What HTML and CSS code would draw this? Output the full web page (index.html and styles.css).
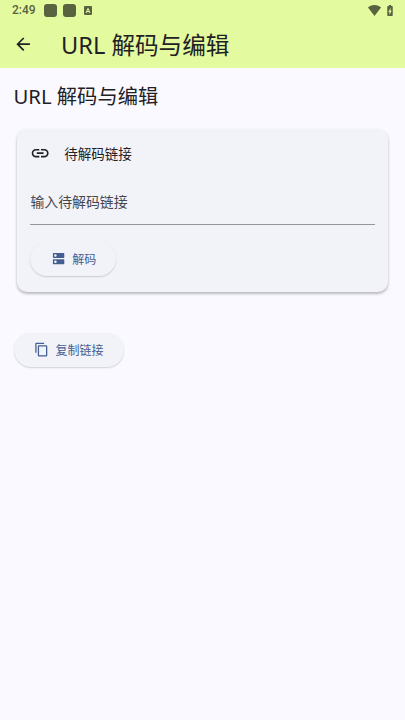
FILE: index.html
```
<!DOCTYPE html>
<html lang="zh-CN">
<head>
<meta charset="utf-8">
<title>URL 解码与编辑</title>
<link rel="stylesheet" href="styles.css">
</head>
<body>
<header class="top">
  <div class="status">
    <span class="time">2:49</span>
    <i class="block"></i><i class="block"></i>
    <svg class="badge" viewBox="0 0 8 9"><rect width="8" height="9" rx="1"/><path d="M2 7 4 2.400 6 7M2.800 5.600h2.400"/></svg>
    <svg class="wifi" viewBox="0 0 24 20"><path d="M12 20 0 4.500C3 1.800 7 0 12 0s9 1.800 12 4.500z"/></svg>
    <svg class="battery" viewBox="7 2 10 20"><path d="M15.670 4H14V2h-4v2H8.330C7.600 4 7 4.600 7 5.330v15.330C7 21.400 7.600 22 8.330 22h7.330c.740 0 1.340-.600 1.340-1.330V5.330C17 4.600 16.400 4 15.670 4zM11 20v-5.500H9L13 7v5.500h2L11 20z"/></svg>
  </div>
  <div class="bar">
    <svg class="icon back" viewBox="0 0 24 24"><path d="M20 11H7.830l5.590-5.590L12 4l-8 8 8 8 1.410-1.410L7.830 13H20v-2z"/></svg>
    <h1>URL 解码与编辑</h1>
  </div>
</header>
<main>
  <h2>URL 解码与编辑</h2>
  <section class="card">
    <div class="card-title">
      <svg class="icon" viewBox="0 0 24 24"><path d="M3.900 12c0-1.710 1.390-3.100 3.100-3.100h4V7H7c-2.760 0-5 2.240-5 5s2.240 5 5 5h4v-1.900H7c-1.710 0-3.100-1.390-3.100-3.100zM8 13h8v-2H8v2zm9-6h-4v1.900h4c1.710 0 3.100 1.390 3.100 3.100s-1.390 3.100-3.100 3.100h-4V17h4c2.760 0 5-2.240 5-5s-2.240-5-5-5z"/></svg>
      <span>待解码链接</span>
    </div>
    <div class="field">输入待解码链接</div>
    <button class="btn decode">
      <svg viewBox="0 0 24 24"><path d="M20 13H4c-.550 0-1 .450-1 1v6c0 .550.450 1 1 1h16c.550 0 1-.450 1-1v-6c0-.550-.450-1-1-1zM7 19c-1.100 0-2-.900-2-2s.900-2 2-2 2 .900 2 2-.900 2-2 2zM20 3H4c-.550 0-1 .450-1 1v6c0 .550.450 1 1 1h16c.550 0 1-.450 1-1V4c0-.550-.450-1-1-1zM7 9c-1.100 0-2-.900-2-2s.900-2 2-2 2 .900 2 2-.900 2-2 2z"/></svg>
      <span>解码</span>
    </button>
  </section>
  <button class="btn copy">
    <svg viewBox="0 0 24 24"><path d="M16 1H4c-1.100 0-2 .900-2 2v14h2V3h12V1zm3 4H8c-1.100 0-2 .900-2 2v14c0 1.100.900 2 2 2h11c1.100 0 2-.900 2-2V7c0-1.100-.900-2-2-2zm0 16H8V7h11v14z"/></svg>
    <span>复制链接</span>
  </button>
</main>
</body>
</html>
```
FILE: styles.css
```
* { box-sizing: border-box; }

body {
  margin: 0;
  min-height: 720px;
  background: #faf9ff;
  color: #1f2125;
  font-family: "Noto Sans", "Noto Sans CJK SC", sans-serif;
}

svg { display: block; flex: none; fill: currentColor; }
h1, h2 { margin: 0; font-weight: 400; white-space: nowrap; }

.top { height: 67.500px; background: #e3fa9f; }

.status {
  display: flex;
  align-items: center;
  height: 20px;
  padding: 0 12px;
  color: #59633f;
}
.time {
  width: 32px;
  font: 500 12px/21px Roboto, sans-serif;
}
.block {
  width: 13px;
  height: 13px;
  margin-right: 6px;
  border-radius: 3px;
  background: #59633f;
}
.badge { width: 8px; height: 9px; margin-left: 2px; }
.badge path { fill: none; stroke: #e3fa9f; stroke-width: 1; }
.wifi { width: 13px; height: 11px; margin-left: auto; }
.battery { width: 6px; height: 11px; margin: 0 0 0 6px; }

.bar {
  display: flex;
  align-items: center;
  height: 48px;
  padding-left: 13.300px;
}
.icon { width: 20.300px; height: 20.300px; }
.bar h1 {
  margin: 1px 0 0 27.400px;
  font-size: 23.600px;
  line-height: 34px;
}

main { padding: 11.500px 13.500px 0; }
h2 {
  padding-top: 1px;
  font-size: 20.300px;
  line-height: 33px;
}

.card {
  height: 163.500px;
  margin: 15.500px 3.500px 0 3px;
  padding: 15px 13.500px 0 13.900px;
  border-radius: 10px;
  background: #f2f3f9;
  box-shadow: 0 2px 3px rgba(0, 0, 0, 0.22), 0 1px 3px rgba(0, 0, 0, 0.08);
}
.card-title {
  display: flex;
  align-items: center;
  gap: 13.500px;
  height: 20px;
  font-size: 13.500px;
}
.card-title span { margin-top: -1px; }
.field {
  height: 49px;
  margin-top: 12.500px;
  padding-top: 15px;
  border-bottom: 1px solid #94969b;
  color: #45474e;
  font-size: 13.900px;
  line-height: 22px;
}

.btn {
  display: flex;
  align-items: center;
  gap: 6.500px;
  height: 33.500px;
  padding: 0 0 0 20.200px;
  border: 0;
  border-radius: 17px;
  background: #f2f3f9;
  box-shadow: 0 1px 1.500px rgba(0, 0, 0, 0.16), 0 0 1px rgba(0, 0, 0, 0.03);
  color: #435e91;
  font-family: inherit;
  font-size: 12px;
  line-height: 18px;
  white-space: nowrap;
}
.btn svg { width: 15.200px; height: 15.200px; }
.btn span { margin-top: 2.500px; }
.decode { width: 86px; margin-top: 17px; }
.copy { width: 110px; margin-top: 41px; }
```
